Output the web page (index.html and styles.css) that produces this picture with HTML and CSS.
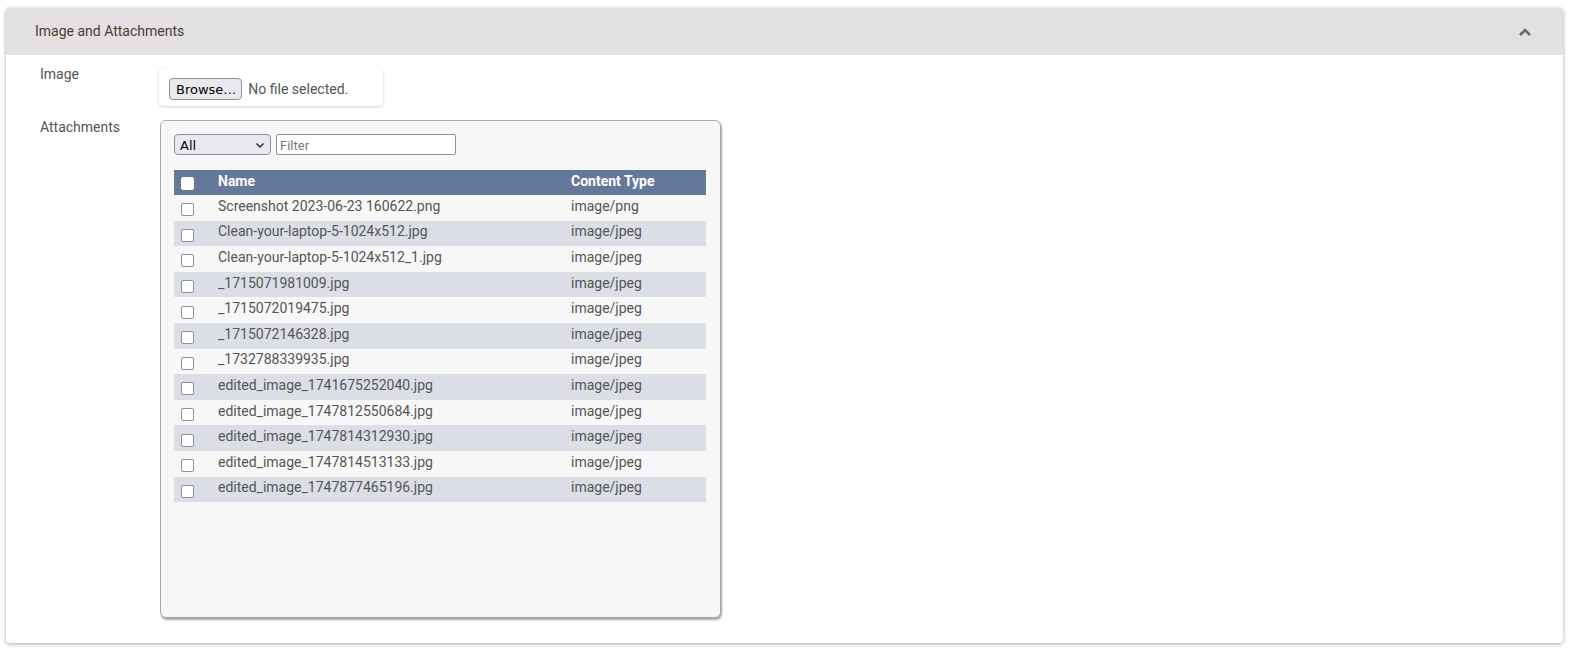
FILE: index.html
```html
<!DOCTYPE html>
<html lang="en">
<head>
    <meta charset="UTF-8">
    <meta name="viewport" content="width=device-width, initial-scale=1.0">
    <title>Image and Attachments</title>
    <link rel="stylesheet" href="styles.css">
</head>
<body>

    <div class="card">
        <!-- Collapsible section header -->
        <div class="card-header">
            <span class="card-title">Image and Attachments</span>
            <svg class="chevron" width="14" height="10" viewBox="0 0 14 10">
                <path d="M2 8 L7 3 L12 8" fill="none" stroke="#6b6b6b" stroke-width="2.6"/>
            </svg>
        </div>

        <div class="card-body">
            <!-- Image field -->
            <div class="field-row">
                <label class="field-label">Image</label>
                <div class="file-box">
                    <button class="browse-btn">Browse…</button>
                    <span class="file-status">No file selected.</span>
                </div>
            </div>

            <!-- Attachments field -->
            <div class="field-row">
                <label class="field-label label-attach">Attachments</label>
                <div class="attach-panel">
                    <div class="attach-tools">
                        <div class="fake-select">
                            <span>All</span>
                            <svg width="10" height="7" viewBox="0 0 10 7">
                                <path d="M1.5 1.5 L5 5 L8.5 1.5" fill="none" stroke="#222" stroke-width="1.4"/>
                            </svg>
                        </div>
                        <input type="text" class="filter-input" placeholder="Filter">
                    </div>

                    <table class="attach-table">
                        <thead>
                            <tr>
                                <th class="col-check"><span class="check check-head"></span></th>
                                <th class="col-name">Name</th>
                                <th>Content Type</th>
                            </tr>
                        </thead>
                        <tbody>
                            <tr><td class="col-check"><span class="check"></span></td><td>Screenshot 2023-06-23 160622.png</td><td>image/png</td></tr>
                            <tr><td class="col-check"><span class="check"></span></td><td>Clean-your-laptop-5-1024x512.jpg</td><td>image/jpeg</td></tr>
                            <tr><td class="col-check"><span class="check"></span></td><td>Clean-your-laptop-5-1024x512_1.jpg</td><td>image/jpeg</td></tr>
                            <tr><td class="col-check"><span class="check"></span></td><td>_1715071981009.jpg</td><td>image/jpeg</td></tr>
                            <tr><td class="col-check"><span class="check"></span></td><td>_1715072019475.jpg</td><td>image/jpeg</td></tr>
                            <tr><td class="col-check"><span class="check"></span></td><td>_1715072146328.jpg</td><td>image/jpeg</td></tr>
                            <tr><td class="col-check"><span class="check"></span></td><td>_1732788339935.jpg</td><td>image/jpeg</td></tr>
                            <tr><td class="col-check"><span class="check"></span></td><td>edited_image_1741675252040.jpg</td><td>image/jpeg</td></tr>
                            <tr><td class="col-check"><span class="check"></span></td><td>edited_image_1747812550684.jpg</td><td>image/jpeg</td></tr>
                            <tr><td class="col-check"><span class="check"></span></td><td>edited_image_1747814312930.jpg</td><td>image/jpeg</td></tr>
                            <tr><td class="col-check"><span class="check"></span></td><td>edited_image_1747814513133.jpg</td><td>image/jpeg</td></tr>
                            <tr><td class="col-check"><span class="check"></span></td><td>edited_image_1747877465196.jpg</td><td>image/jpeg</td></tr>
                        </tbody>
                    </table>
                </div>
            </div>
        </div>
    </div>

</body>
</html>
```

FILE: styles.css
```css
body {
    margin: 0;
    padding: 8px 7px 6px 6px;
    background-color: #fff;
    font-family: "Roboto", "Liberation Sans", sans-serif;
    font-size: 14px;
    color: #555;
}

.card {
    background-color: #fff;
    border-radius: 4px;
    box-shadow: 0 1px 4px rgba(0, 0, 0, 0.35);
    overflow: hidden;
}

.card-header {
    height: 47px;
    display: flex;
    align-items: center;
    justify-content: space-between;
    padding: 0 31px 0 29px;
    background-color: #e2e0e1;
}

.card-title {
    color: #4a3d35;
    font-size: 14px;
    margin-top: -1px;
}

.chevron {
    margin-top: 1px;
}

.card-body {
    padding: 13px 0 25px 34px;
    display: flex;
    flex-direction: column;
    gap: 14px;
}

.field-row {
    display: flex;
    align-items: flex-start;
}

.field-label {
    width: 119px;
    flex-shrink: 0;
    color: #555;
    line-height: 12px;
}

.label-attach {
    margin-top: 1px;
}

.file-box {
    width: 224px;
    height: 38px;
    box-sizing: border-box;
    display: flex;
    align-items: center;
    gap: 6px;
    padding: 0 9px 0 10px;
    background-color: #fff;
    border-radius: 4px;
    box-shadow: 0 1px 3px rgba(0, 0, 0, 0.18);
}

.browse-btn {
    height: 22px;
    margin-top: 4px;
    padding: 0 5px 0 6px;
    font-family: "DejaVu Sans", sans-serif;
    font-size: 13px;
    color: #000;
    background-color: #e9e9ed;
    border: 1px solid #8f8f9d;
    border-radius: 4px;
}

.file-status {
    margin-top: 4px;
    color: #555;
}

.attach-panel {
    width: 561px;
    height: 498px;
    box-sizing: border-box;
    margin-left: 1px;
    padding: 13px 14px 0 13px;
    background-color: #f7f7f7;
    border: 1px solid #a8a8a8;
    border-radius: 6px;
    box-shadow: 1px 2px 2px rgba(0, 0, 0, 0.35);
}

.attach-tools {
    display: flex;
    gap: 5px;
    margin-bottom: 15px;
}

.fake-select {
    width: 97px;
    height: 21px;
    box-sizing: border-box;
    display: flex;
    align-items: center;
    justify-content: space-between;
    padding: 1px 5px 0 5px;
    font-family: "DejaVu Sans", sans-serif;
    font-size: 13px;
    color: #000;
    background-color: #e9e9ed;
    border: 1px solid #8f8f9d;
    border-radius: 4px;
}

.filter-input {
    width: 180px;
    height: 21px;
    box-sizing: border-box;
    padding: 1px 3px 0;
    font-family: "Roboto", sans-serif;
    font-size: 13px;
    background-color: #fff;
    border: 1px solid #8f8f9d;
    border-radius: 2px;
}

.filter-input::placeholder {
    color: #777;
}

.attach-table {
    width: 532px;
    border-collapse: collapse;
}

.attach-table th {
    height: 22px;
    padding: 0 0 3px 0;
    text-align: left;
    color: #fff;
    font-weight: bold;
    background-color: #66789a;
}

.attach-table td {
    height: 21.6px;
    padding: 0 0 4px 0;
    color: #555;
}

.attach-table tbody tr:nth-child(even) {
    background-color: #dcdee5;
}

.col-check {
    width: 44px;
}

.col-name {
    width: 353px;
}

.attach-table th.col-check {
    height: 25px;
    padding-bottom: 0;
}

.attach-table td.col-check {
    height: 25.6px;
    padding: 0;
}

.check {
    display: block;
    width: 13px;
    height: 13px;
    box-sizing: border-box;
    margin: 4px 0 0 7px;
    background-color: #fff;
    border: 1px solid #8f8f9d;
    border-radius: 2px;
}

.check-head {
    margin-top: 1px;
    border-color: #fff;
}
```
